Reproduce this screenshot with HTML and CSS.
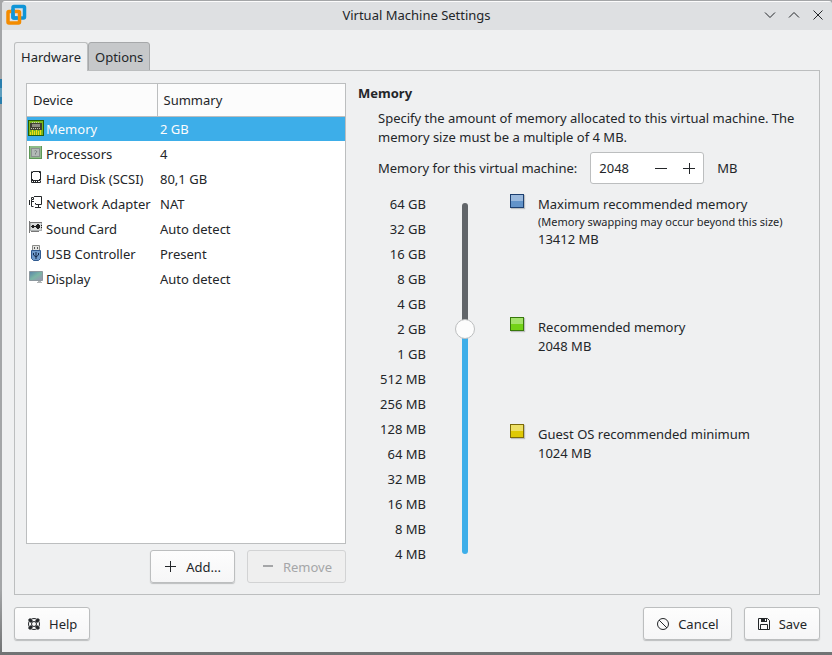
FILE: index.html
```html
<!DOCTYPE html>
<html lang="en">
<head>
<meta charset="utf-8">
<title>Virtual Machine Settings</title>
<link rel="stylesheet" href="styles.css">
</head>
<body>
<div class="window">
  <header class="titlebar">
    <svg class="logo" width="22" height="22" viewBox="0 0 22 22" fill="none" stroke-width="3.500">
      <rect x="8" y="2.500" width="11.500" height="11.500" rx="1" stroke="#0f95d7"/>
      <rect x="3" y="7.500" width="11.500" height="11.500" rx="1" stroke="#f38b00"/>
      <path d="M8 5v8q0 1 1 1h3.500" stroke="#0f95d7"/>
    </svg>
    <h1 class="title">Virtual Machine Settings</h1>
    <div class="controls">
      <button class="control" aria-label="Minimize"><svg width="12" height="12" viewBox="0 0 12 12"><path d="M1 3.500l5 5 5-5"/></svg></button>
      <button class="control" aria-label="Maximize"><svg width="12" height="12" viewBox="0 0 12 12"><path d="M1 8.500l5-5 5 5"/></svg></button>
      <button class="control" aria-label="Close"><svg width="12" height="12" viewBox="0 0 12 12"><path d="M1.500 1.500l9 9M10.500 1.500l-9 9"/></svg></button>
    </div>
  </header>

  <main class="content">
    <div class="tabs" role="tablist">
      <button class="tab tab-active" role="tab" aria-selected="true">Hardware</button>
      <button class="tab" role="tab" aria-selected="false">Options</button>
    </div>

    <div class="panel" role="tabpanel">
      <section class="devices">
        <div class="list">
          <table class="table">
            <thead><tr><th class="col-device">Device</th><th>Summary</th></tr></thead>
            <tbody>
              <tr class="selected"><td><span class="device">
                <svg width="16" height="16" viewBox="0 0 16 16"><path fill="#245c08" d="M0 0h16v16H0z"/><path fill="#7cb81c" d="M1 1h14v14H1z"/><path fill="#3f3f32" d="M2 3h12v7H2z"/><path stroke="#c8c8b8" stroke-dasharray="1 1" d="M4 2.500h8M3 8.500h10"/><path fill="#8d8d80" d="M4 4h8v3H4z"/><path stroke="#f0dc14" d="M2.500 12v3M4.500 10v5M6.500 11v4M8.500 10v5M10.500 11v4M12.500 10v5"/></svg>
                Memory</span></td><td>2 GB</td></tr>
              <tr><td><span class="device">
                <svg width="16" height="16" viewBox="0 0 16 16"><path fill="#5d9857" d="M1 1h13v13H1z"/><path fill="#8fbb88" d="M2 1h11v12H2z"/><path fill="#8b9190" d="M3 3h9v9H3z"/><path fill="#b3bab7" d="M4 4h7v7H4z"/><path fill="none" stroke="#7a827f" d="M6.500 6q1-1 2 0t-1 2v1.500"/></svg>
                Processors</span></td><td>4</td></tr>
              <tr><td><span class="device">
                <svg width="16" height="16" viewBox="0 0 16 16"><path fill="none" stroke="#232629" d="M4.500 1.500h8v8.500M3.500 10V1.500M12.500 10.500v2h-9v-2M4 10.500h8"/><path fill="#232629" d="M4 2h1v1H4zM11 2h1v1h-1zM4 9h1v1H4zM11 9h1v1h-1zM3 10h1v1H3zM5 11h1v1H5zM7 11h1v1H7zM9 11h1v1H9z"/></svg>
                Hard Disk (SCSI)</span></td><td>80,1 GB</td></tr>
              <tr><td><span class="device">
                <svg width="16" height="16" viewBox="0 0 16 16" fill="none" stroke="#232629"><path d="M6 1.500h7.500v8H8M7.500 8v1.500M7 12.500h6M10.500 10v2M3.500 2.500h2v2h-2zM3.500 5v6.500h2M1.500 5v5M4 6.500h2"/></svg>
                Network Adapter</span></td><td>NAT</td></tr>
              <tr><td><span class="device">
                <svg width="16" height="16" viewBox="0 0 16 16"><path fill="#aeb2b2" d="M2 2h12v9H2z"/><path fill="#dadcdc" d="M3 3h10v7H3z"/><path stroke="#777" fill="none" d="M1.500 1v12M1 2.500h13M3 11.500h8"/><path fill="#202020" d="M3 6h9v1H3zM4 5h2v3H4zM8 5h4v3H8zM9 4h2v5H9zM13 5h1v1h-1zM13 7h1v1h-1z"/></svg>
                Sound Card</span></td><td>Auto detect</td></tr>
              <tr><td><span class="device">
                <svg width="16" height="16" viewBox="0 0 16 16"><path fill="#e4e4e1" stroke="#8a8b88" d="M4.500.500h7v5h-7z"/><path fill="#555" d="M6 2h1v2H6zM9 2h1v2H9z"/><path fill="#6f9aca" stroke="#305a90" d="M3.500 5.500h9v8l-2 2h-5l-2-2z"/><path fill="none" stroke="#13294a" d="M8 7v7M5.500 8v2L8 12l2.500-2V8"/></svg>
                USB Controller</span></td><td>Present</td></tr>
              <tr><td><span class="device">
                <svg width="16" height="16" viewBox="0 0 16 16"><defs><linearGradient id="screen" x2="1" y2="1"><stop stop-color="#5a83a9"/><stop offset=".5" stop-color="#7bb6a5"/><stop offset="1" stop-color="#9c92b5"/></linearGradient></defs><path fill="url(#screen)" stroke="#8d999f" d="M1.500 1.500h13v9h-13z"/><path fill="#b1b4b5" d="M10 11h3v1h1v1H9v-1h1z"/></svg>
                Display</span></td><td>Auto detect</td></tr>
            </tbody>
          </table>
        </div>
        <div class="actions">
          <button class="button"><svg width="14" height="14" viewBox="0 0 14 14"><path d="M6.500 1v11M1 6.500h11"/></svg>Add...</button>
          <button class="button" disabled><svg width="14" height="14" viewBox="0 0 14 14"><path stroke-width="2" d="M2 6h10"/></svg>Remove</button>
        </div>
      </section>

      <section class="memory">
        <h2 class="heading">Memory</h2>
        <div class="details">
          <p class="text">Specify the amount of memory allocated to this virtual machine. The memory size must be a multiple of 4 MB.</p>
          <div class="amount">
            <label for="amount">Memory for this virtual machine:</label>
            <div class="spinbox">
              <input id="amount" class="number" type="text" inputmode="numeric" value="2048">
              <button class="step" aria-label="Decrease"><svg width="12" height="12" viewBox="0 0 12 12"><path d="M0 6.500h12"/></svg></button>
              <button class="step" aria-label="Increase"><svg width="12" height="12" viewBox="0 0 12 12"><path d="M0 6.500h12M6.500 1v11"/></svg></button>
            </div>
            <span>MB</span>
          </div>
          <div class="scale">
            <ul class="marks">
              <li>64 GB</li><li>32 GB</li><li>16 GB</li><li>8 GB</li><li>4 GB</li><li>2 GB</li><li>1 GB</li><li>512 MB</li><li>256 MB</li><li>128 MB</li><li>64 MB</li><li>32 MB</li><li>16 MB</li><li>8 MB</li><li>4 MB</li>
            </ul>
            <div class="slider"><input class="range" type="range" min="0" max="14" value="9" aria-label="Memory size"></div>
            <ul class="legend">
              <li class="hint hint-spaced"><span class="swatch blue"></span><div class="hint-text">Maximum recommended memory<small class="note">(Memory swapping may occur beyond this size)</small>13412 MB</div></li>
              <li class="hint hint-spaced"><span class="swatch green"></span><div class="hint-text">Recommended memory<br>2048 MB</div></li>
              <li class="hint"><span class="swatch yellow"></span><div class="hint-text">Guest OS recommended minimum<br>1024 MB</div></li>
            </ul>
          </div>
        </div>
      </section>
    </div>

    <footer class="footer">
      <button class="button help"><svg width="14" height="14" viewBox="0 0 14 14"><circle cx="7" cy="7" r="5.500"/><circle cx="7" cy="7" r="2.500"/><path stroke-width="3" d="M2 2l3 3M12 2l-3 3M2 12l3-3M12 12l-3-3"/></svg>Help</button>
      <button class="button"><svg width="14" height="14" viewBox="0 0 14 14"><circle cx="7" cy="7" r="5.500"/><path d="M3 3l8 8"/></svg>Cancel</button>
      <button class="button"><svg width="14" height="14" viewBox="0 0 14 14"><path d="M1.500 1.500h9l2 2v9h-11zM3.500 12V7.500h7V12"/><path class="solid" d="M4 1h6v4H4z"/><path stroke="#fcfcfc" d="M8.500 2v2"/></svg>Save</button>
    </footer>
  </main>
</div>
</body>
</html>
```
FILE: styles.css
```css
* {
  box-sizing: border-box;
}

body {
  margin: 0;
  padding: 1px 0 3px 2px;
  min-height: 100vh;
  display: flex;
  background:
    linear-gradient(#a4a6a8 79px, #2a7fae 79px, #2a7fae 88px, #5c9dbd 88px, #5c9dbd 97px, #2a7fae 97px, #2a7fae 104px, #a4a6a8 104px) 0 0 / 2px 200px no-repeat,
    linear-gradient(#a4a6a8, #a4a6a8 90%, #707273);
  color: #232629;
  font: 13px/19px "Noto Sans", sans-serif;
}

button,
input {
  font: inherit;
  color: inherit;
}

ul {
  margin: 0;
  padding: 0;
  list-style: none;
}

svg {
  flex: none;
}

.window {
  flex: 1;
  display: flex;
  flex-direction: column;
  background: #eff0f1;
  border-radius: 4px 4px 0 0;
  overflow: hidden;
}

.titlebar {
  display: grid;
  grid-template-columns: 1fr auto 1fr;
  align-items: center;
  height: 29px;
  padding: 0 8px 2px 3px;
  background: #dee0e2;
  border-top: 1px solid #fcfcfc;
}

.title {
  margin: 0 0 0 4px;
  font-size: 13px;
  font-weight: 400;
}

.controls {
  display: flex;
  justify-content: flex-end;
  gap: 12px;
}

.control {
  display: flex;
  padding: 0;
  border: 0;
  background: none;
}

.control svg,
.step svg,
.button svg {
  fill: none;
  stroke: currentColor;
}

.content {
  flex: 1;
  display: flex;
  flex-direction: column;
  padding: 12px;
}

.tabs {
  display: flex;
  align-items: flex-start;
  margin-bottom: -1px;
}

.tab {
  height: 29px;
  padding: 2px 6px 0;
  border: 1px solid #a6a8aa;
  border-radius: 3px 3px 0 0;
  background: #c6c8ca;
}

.tab-active {
  padding-top: 1px;
  border-color: #bcbebf;
  border-bottom: 0;
  background: #eff0f1;
  z-index: 1;
}

.panel {
  flex: 1;
  display: flex;
  gap: 12px;
  padding: 12px 11px 11px;
  border: 1px solid #bcbebf;
}

.devices {
  flex: 0 0 320px;
  display: flex;
  flex-direction: column;
  gap: 6px;
}

.list {
  flex: 1;
  border: 1px solid #bcbebf;
  background: #fff;
}

.table {
  width: 100%;
  table-layout: fixed;
  border-collapse: collapse;
}

.table th {
  height: 32px;
  padding: 2px 6px 0;
  border-bottom: 1px solid #bcbebf;
  background: #fcfcfc;
  font-weight: 400;
  text-align: left;
}

.table .col-device {
  width: 130px;
  border-right: 1px solid #bcbebf;
}

.table td {
  height: 25px;
  padding: 2px 3px 0;
  white-space: nowrap;
}

.table td:first-child {
  padding-left: 1px;
  padding-right: 0;
}

.device {
  display: flex;
  align-items: flex-start;
  gap: 2px;
}

.selected {
  background: #3daee9;
  color: #fcfcfc;
}

.actions {
  display: flex;
  justify-content: flex-end;
  gap: 12px;
}

.button {
  display: flex;
  align-items: center;
  gap: 8px;
  height: 33px;
  padding: 1px 12px 0;
  border: 1px solid #bcbebf;
  border-radius: 3px;
  background: linear-gradient(#fdfdfd, #f6f6f7);
  box-shadow: 0 1px 1px #bcbebf;
}

.button:disabled {
  border-color: #d2d3d4;
  background: #efefef;
  box-shadow: none;
  color: #a5a6a8;
}

.actions .button {
  padding: 1px 13px 0;
}

.button .solid {
  fill: currentColor;
  stroke: none;
}

.memory {
  flex: 1;
  padding-top: 1px;
}

.heading {
  margin: 0 0 6px;
  font-size: 13px;
  font-weight: 700;
}

.details {
  padding-left: 20px;
}

.text {
  margin: 0 0 5px;
}

.amount {
  display: flex;
  align-items: center;
  gap: 13px;
}

.spinbox {
  display: flex;
  align-items: center;
  width: 114px;
  height: 32px;
  border: 1px solid #bcbebf;
  border-radius: 3px;
  background: #fff;
}

.number {
  flex: 1;
  min-width: 0;
  padding: 0 8px;
  border: 0;
  background: none;
  outline: 0;
}

.step {
  display: flex;
  padding: 0 8px;
  border: 0;
  background: none;
}

.scale {
  display: flex;
  margin-top: 8px;
}

.marks {
  flex: 0 0 48px;
  line-height: 25px;
  text-align: right;
}

.slider {
  flex: none;
  display: grid;
  justify-items: center;
  width: 20px;
  height: 370px;
  margin: 2px 35px 0 29px;
}

.slider::before {
  content: "";
  grid-area: 1 / 1;
  width: 6px;
  margin: 9px 0 10px;
  border-radius: 3px;
  background: linear-gradient(#616569 36%, #3daee9 36%);
}

.range {
  grid-area: 1 / 1;
  appearance: none;
  writing-mode: vertical-lr;
  direction: rtl;
  width: 20px;
  height: 370px;
  margin: 0;
  background: none;
}

.range::-webkit-slider-thumb {
  appearance: none;
  width: 20px;
  height: 20px;
  border: 1px solid #bcbebf;
  border-radius: 50%;
  background: #fcfcfc;
}

.legend {
  padding-top: 2px;
}

.hint {
  display: flex;
  gap: 14px;
}

.hint-spaced {
  margin-bottom: 68px;
}

.hint-text {
  padding-top: 1px;
}

.note {
  display: block;
  font-size: 11px;
  line-height: 16px;
}

.swatch {
  flex: none;
  width: 14px;
  height: 14px;
  border: 1px solid;
  box-shadow: 1px 1px 1px #bcbebf;
}

.blue {
  border-color: #1c3f70;
  background: linear-gradient(#9ab9dd 50%, #6293c9 50%);
}

.green {
  border-color: #37780b;
  background: linear-gradient(#a4e36b 50%, #73d216 50%);
}

.yellow {
  border-color: #7c6a08;
  background: linear-gradient(#eee065 50%, #dfc905 50%);
}

.footer {
  display: flex;
  gap: 12px;
  margin-top: 12px;
}

.help {
  margin-right: auto;
}
```
